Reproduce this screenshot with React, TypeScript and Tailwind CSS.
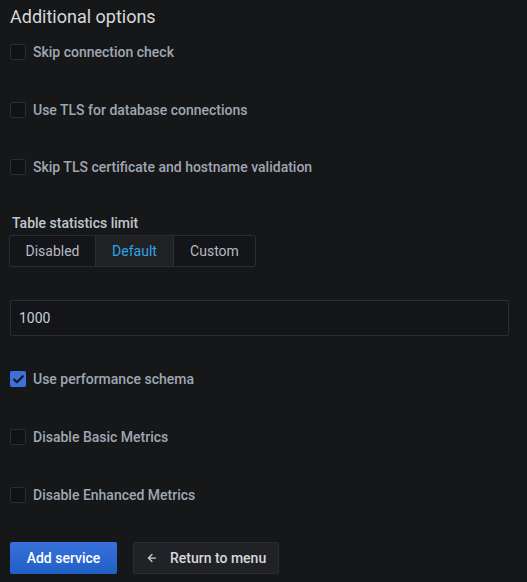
import React from 'react';
import { ArrowLeft, Check } from 'lucide-react';

const font = { fontFamily: 'Roboto, "Liberation Sans", sans-serif' };

function CheckRow({ label, checked = false, className = '' }: { label: string; checked?: boolean; className?: string }) {
  return (
    <div className={`flex items-center h-4 ${className}`}>
      {checked ? (
        <div className="w-4 h-4 rounded-[2px] bg-[#3d71d9] flex items-center justify-center">
          <Check size={13} strokeWidth={4} className="text-[#14161a]" />
        </div>
      ) : (
        <div className="w-4 h-4 rounded-[2px] bg-[#111216] border border-[#2a2d31]" />
      )}
      <span className="ml-[7px] text-[14px] font-medium text-[#9fa7b3] leading-4">{label}</span>
    </div>
  );
}

function Segment({ label, active = false, last = false }: { label: string; active?: boolean; last?: boolean }) {
  return (
    <div
      className={`h-full flex items-center justify-center text-[14px] ${
        last ? '' : 'border-r border-[#2a2d31]'
      } ${active ? 'bg-[#1f2125] text-[#33a2e5]' : 'text-[#b4bac2]'}`}
    >
      {label}
    </div>
  );
}

export default function App() {
  return (
    <div style={font} className="w-[527px] h-[582px] bg-[#161719] pl-[10px] pr-[18px] pt-[5px] overflow-hidden">
      <h2 className="text-[18px] leading-6 text-[#d8d9da]">Additional options</h2>

      <CheckRow label="Skip connection check" className="mt-[15px]" />
      <CheckRow label="Use TLS for database connections" className="mt-[42px]" />
      <CheckRow label="Skip TLS certificate and hostname validation" className="mt-[41px]" />

      <div className="mt-[38px] ml-[2px] text-[14px] font-medium leading-5 text-[#c0c6ce]">Table statistics limit</div>
      <div className="mt-[2px] -ml-px h-8 w-[247px] grid grid-cols-[86px_78px_1fr] border border-[#2a2d31] rounded-[2px] bg-[#141518]">
        <Segment label="Disabled" />
        <Segment label="Default" active />
        <Segment label="Custom" last />
      </div>

      <div className="mt-[33px] h-9 w-full flex items-center px-2 border border-[#2a2d31] rounded-[2px] bg-[#141518] text-[14px] text-[#c7d0d9]">
        1000
      </div>

      <CheckRow label="Use performance schema" checked className="mt-[35px]" />
      <CheckRow label="Disable Basic Metrics" className="mt-[42px]" />
      <CheckRow label="Disable Enhanced Metrics" className="mt-[42px]" />

      <div className="mt-[39px] flex gap-4">
        <button className="h-8 w-[107px] rounded-[2px] bg-gradient-to-b from-[#3871dc] to-[#1f5fc4] text-white text-[14px] font-medium">
          Add service
        </button>
        <button className="h-8 w-[146px] rounded-[2px] bg-[#202226] border border-[#2a2d31] text-[#d8d9da] text-[14px] font-medium flex items-center pl-[12px]">
          <ArrowLeft size={12} strokeWidth={2.5} className="text-[#c7d0d9]" />
          <span className="ml-[12px]">Return to menu</span>
        </button>
      </div>
    </div>
  );
}
